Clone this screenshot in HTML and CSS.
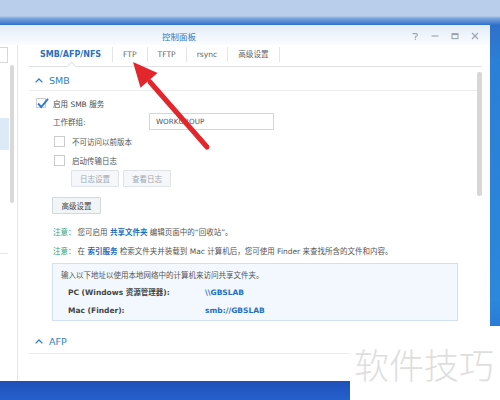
FILE: index.html
```html
<!DOCTYPE html>
<html>
<head>
<meta charset="utf-8">
<link rel="stylesheet" href="styles.css">
</head>
<body>
<div class="desktop">
  <div class="window">
    <header class="titlebar">
      <span class="title">控制面板</span>
      <div class="controls">
        <svg class="ctl" viewBox="0 0 8 8"><path d="M1.6 1.6 H4.8 Q6.4 1.6 6.4 3.1 Q6.4 4.3 4.4 4.7 V6.2" /><rect x="3.8" y="6.9" width="1.2" height="1" class="dot"/></svg>
        <svg class="ctl" viewBox="0 0 8 8"><path d="M0.5 4 H7.5" /></svg>
        <svg class="ctl" viewBox="0 0 8 8"><rect x="1" y="1.8" width="6" height="4.8" /><path d="M1 2.2 H7" class="thick"/></svg>
        <svg class="ctl" viewBox="0 0 8 8"><path d="M1 1 L7 7 M7 1 L1 7" /></svg>
      </div>
    </header>
    <div class="wbody">
      <aside class="sidebar">
        <div class="search"></div>
        <div class="sel"></div>
        <div class="sline"></div>
        <div class="sscroll"></div>
      </aside>
      <main class="content">
        <nav class="tabs">
          <span class="tab active">SMB/AFP/NFS</span>
          <span class="tab">FTP</span>
          <span class="tab">TFTP</span>
          <span class="tab">rsync</span>
          <span class="tab">高级设置</span>
        </nav>
        <section class="sec">
          <div class="sec-head smb">
            <svg class="chev" viewBox="0 0 8 5"><polyline points="0.6,4.4 4,1 7.4,4.4" /></svg>
            <span>SMB</span>
          </div>
          <div class="sec-body">
            <div class="row r-enable">
              <span class="cb checked"><svg class="tick" viewBox="0 0 12 12"><polyline points="1,6.5 4.2,10 11,1.8" /></svg></span>
              <span>启用 SMB 服务</span>
            </div>
            <div class="row r-wg">
              <span class="lbl">工作群组:</span>
              <span class="input">WORKGROUP</span>
            </div>
            <div class="row r-sub">
              <span class="cb"></span>
              <span>不可访问以前版本</span>
            </div>
            <div class="row r-sub r-log">
              <span class="cb"></span>
              <span>启动传输日志</span>
            </div>
            <div class="row r-btns">
              <span class="btn disabled">日志设置</span>
              <span class="btn disabled">查看日志</span>
            </div>
            <div class="row r-adv">
              <span class="btn">高级设置</span>
            </div>
            <p class="note"><span class="warn">注意：</span>您可启用 <b class="link">共享文件夹</b> 编辑页面中的“回收站”。</p>
            <p class="note n2"><span class="warn">注意：</span>在 <b class="link">索引服务</b> 检索文件夹并装载到 Mac 计算机后，您可使用 Finder 来查找所含的文件和内容。</p>
            <div class="info">
              <p class="intro">输入以下地址以使用本地网络中的计算机来访问共享文件夹。</p>
              <div class="irow"><span class="k">PC (Windows 资源管理器):</span><span class="v">\\GBSLAB</span></div>
              <div class="irow r2"><span class="k">Mac (Finder):</span><span class="v">smb://GBSLAB</span></div>
            </div>
          </div>
        </section>
        <section class="sec">
          <div class="sec-head afp">
            <svg class="chev" viewBox="0 0 8 5"><polyline points="0.6,4.4 4,1 7.4,4.4" /></svg>
            <span>AFP</span>
          </div>
        </section>
        <div class="cscroll"></div>
      </main>
    </div>
  </div>
  <div class="wm">软件技巧</div>
  <svg class="arrow" viewBox="0 0 500 400">
    <line x1="207" y1="147" x2="150" y2="82" />
    <polygon points="133,62 157.5,73 140.5,87.8" />
  </svg>
</div>
</body>
</html>
```

FILE: styles.css
```css
* { box-sizing: border-box; margin: 0; padding: 0; }
html, body { width: 500px; height: 400px; overflow: hidden; }
body {
  font-family: "DejaVu Sans", "Noto Sans CJK SC", sans-serif;
  font-size: 7.5px;
  color: #555;
}
.desktop {
  position: relative;
  width: 500px;
  height: 400px;
  background: linear-gradient(to bottom,
    #b8ceeb 0, #b8ceeb 16px, #80a7dd 18px, #2f70c9 25px,
    #2a7fd6 60px, #2b88db 300px, #2a7ad6 326px,
    #1f50b8 381px, #2560cc 400px);
}
.window {
  position: absolute;
  left: 0;
  top: 25px;
  width: 490px;
  height: 356px;
  background: #fff;
  display: flex;
  flex-direction: column;
}
.titlebar {
  height: 20px;
  flex: none;
  display: flex;
  align-items: center;
  padding-top: 2px;
  background: linear-gradient(#e2ecf8, #fbfdff);
}
.title {
  margin-left: 162px;
  font-family: "Noto Sans CJK SC", sans-serif;
  font-size: 8.5px;
  color: #3276c0;
}
.controls {
  margin-left: auto;
  margin-right: 11px;
  display: flex;
  gap: 12px;
}
.ctl {
  width: 8px;
  height: 8px;
  fill: none;
  stroke: #9aa4ae;
  stroke-width: 1.1;
}
.ctl .dot { fill: #9aa4ae; stroke: none; }
.ctl .thick { stroke-width: 1.8; }

.wbody { flex: 1; display: flex; }

.sidebar {
  width: 18px;
  flex: none;
  border-right: 1px solid #e4e6e9;
  position: relative;
  display: flex;
  flex-direction: column;
}
.search {
  margin-top: 2px;
  width: 8px;
  height: 16px;
  border: 1px solid #d5d8db;
  border-left: none;
}
.sel {
  margin-top: 55px;
  width: 9px;
  height: 32px;
  background: #dce9f7;
}
.sline {
  margin-top: 103px;
  width: 8px;
  height: 1px;
  background: #e6e6e6;
}
.sscroll {
  position: absolute;
  left: 10px;
  top: 20px;
  width: 4px;
  height: 138px;
  background: #d9d9d9;
  border-radius: 2px;
}

.content {
  flex: 1;
  padding: 0 8px 0 11px;
  position: relative;
}
.tabs {
  display: flex;
  height: 22px;
  border-bottom: 1px solid #dfe3e8;
}
.tab {
  margin-top: 2px;
  height: 15px;
  line-height: 15px;
  padding: 0 10px;
  border-right: 1px solid #e3e5e8;
  font-size: 7.6px;
  color: #666;
  white-space: nowrap;
}
.tab.active {
  padding: 0 11px;
  font-size: 8px;
  font-weight: bold;
  color: #2a70bb;
  position: relative;
}
.tab.active::after {
  content: "";
  position: absolute;
  left: 50%;
  top: 16px;
  width: 6px;
  height: 6px;
  margin-left: -3px;
  background: #fff;
  border-left: 1px solid #dfe3e8;
  border-top: 1px solid #dfe3e8;
  transform: rotate(45deg);
}

.sec-head {
  display: flex;
  align-items: center;
  gap: 6px;
  padding-left: 6px;
  border-bottom: 1px solid #ebedef;
  color: #2f7fc6;
  font-size: 9.5px;
}
.sec-head.smb { height: 24px; padding-top: 3px; }
.sec-head.afp { height: 25px; margin-top: 8px; }
.chev {
  width: 8px;
  height: 5px;
  fill: none;
  stroke: #2f7fc6;
  stroke-width: 1.3;
}

.sec-body { display: flex; flex-direction: column; }
.row { display: flex; align-items: center; }
.r-enable { margin-top: 6px; height: 12px; margin-left: 7px; gap: 7px; color: #4a4a4a; }
.cb {
  flex: none;
  width: 11px;
  height: 11px;
  border: 1px solid #c9cdd1;
  background: #fff;
  position: relative;
}
.cb.checked { width: 10px; height: 10px; }
.tick {
  position: absolute;
  left: 0;
  top: -2px;
  width: 12px;
  height: 12px;
  fill: none;
  stroke: #2d7bd0;
  stroke-width: 1.9;
}
.r-wg { margin-top: 4px; height: 17px; margin-left: 24px; }
.lbl { width: 96px; }
.input {
  width: 125px;
  height: 17px;
  border: 1px solid #d3d7db;
  padding-left: 6px;
  line-height: 15px;
  font-size: 7.2px;
  color: #555;
}
.r-sub { margin-top: 6px; height: 11px; margin-left: 25px; gap: 7px; }
.r-sub.r-log { margin-top: 8px; }
.r-btns { margin-top: 4px; height: 17px; margin-left: 42px; gap: 4px; }
.r-adv { margin-top: 10px; height: 17px; margin-left: 23px; }
.btn {
  width: 48px;
  height: 17px;
  display: flex;
  align-items: center;
  justify-content: center;
  border: 1px solid #d3d8de;
  border-radius: 1px;
  background: #f2f5f8;
  color: #444;
}
.r-adv .btn { width: 49px; }
.btn.disabled {
  border-color: #dfe3e8;
  background: #f5f7fa;
  color: #a0a8b1;
}
.note {
  margin-top: 13px;
  margin-left: 24px;
  line-height: 12px;
  white-space: nowrap;
}
.note.n2 { margin-top: 7px; }
.warn { color: #35a27a; margin-right: 2px; }
.link { color: #1d6fc0; font-weight: bold; }
.info {
  margin-top: 5px;
  margin-left: 23px;
  width: 406px;
  height: 58px;
  border: 1px solid #d0e2f1;
  background: #f2f8fd;
  padding: 6px 0 0 8px;
}
.intro { line-height: 11px; }
.irow {
  display: flex;
  margin-top: 6px;
  padding-left: 7px;
  line-height: 11px;
  font-weight: bold;
  color: #444;
}
.irow.r2 { margin-top: 7px; }
.k { width: 137px; white-space: nowrap; }
.v { color: #1f6fc0; }
.cscroll {
  position: absolute;
  left: 459px;
  top: 27px;
  width: 5px;
  height: 124px;
  background: #d7d7d7;
  border-radius: 2px;
}

.wm {
  position: absolute;
  left: 350px;
  top: 326px;
  width: 150px;
  height: 74px;
  background: #fff;
  display: flex;
  align-items: center;
  padding-left: 4px;
  font-family: "Noto Sans CJK SC", sans-serif;
  font-size: 35px;
  font-weight: 300;
  line-height: 1;
  color: #dedede;
  white-space: nowrap;
}
.arrow {
  position: absolute;
  left: 0;
  top: 0;
  width: 500px;
  height: 400px;
  pointer-events: none;
}
.arrow line { stroke: #e3262b; stroke-width: 5; stroke-linecap: round; }
.arrow polygon { fill: #e3262b; }
```
